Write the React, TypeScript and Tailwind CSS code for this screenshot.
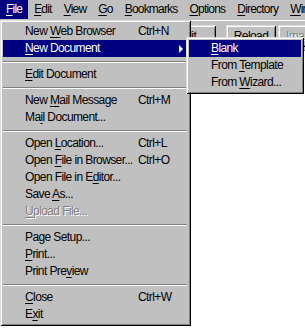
type Item =
  | { label: string; shortcut?: string; sub?: boolean; active?: boolean; disabled?: boolean }
  | 'sep';

const menuBar = ['&File', '&Edit', '&View', '&Go', '&Bookmarks', '&Options', '&Directory', '&Window'];

const fileItems: Item[] = [
  { label: 'New &Web Browser', shortcut: 'Ctrl+N' },
  { label: '&New Document', sub: true, active: true },
  'sep',
  { label: '&Edit Document' },
  'sep',
  { label: 'New &Mail Message', shortcut: 'Ctrl+M' },
  { label: 'Ma&il Document...' },
  'sep',
  { label: 'Open &Location...', shortcut: 'Ctrl+L' },
  { label: 'Open &File in Browser...', shortcut: 'Ctrl+O' },
  { label: 'Open File in E&ditor...' },
  { label: 'Save &As...' },
  { label: '&Upload File...', disabled: true },
  'sep',
  { label: 'Page Setup...' },
  { label: '&Print...' },
  { label: 'Print Pre&view' },
  'sep',
  { label: '&Close', shortcut: 'Ctrl+W' },
  { label: 'E&xit' },
];

const newDocItems = [
  { label: '&Blank', active: true },
  { label: 'From &Template' },
  { label: 'From &Wizard...' },
];

// "&" marks the access key letter
function Label({ text }: { text: string }) {
  const i = text.indexOf('&');
  if (i < 0) return <>{text}</>;
  return (
    <>
      {text.slice(0, i)}
      <span className="underline decoration-1 underline-offset-[2px]">{text[i + 1]}</span>
      {text.slice(i + 2)}
    </>
  );
}

const bevel =
  'shadow-[inset_1px_1px_0_#dfdfdf,inset_-1px_-1px_0_#000000,inset_2px_2px_0_#ffffff,inset_-2px_-2px_0_#808080]';

function ToolButton({ label, w, ml = 'ml-[2px]', dim = false }: { label: string; w: string; ml?: string; dim?: boolean }) {
  return (
    <div
      className={`${w} ${ml} h-[22px] shrink-0 flex items-center justify-center bg-[#c0c0c0] ${bevel} ${
        dim ? 'text-[#808080] [text-shadow:1px_1px_0_#ffffff]' : 'text-black'
      }`}
    >
      {label}
    </div>
  );
}

export default function App() {
  return (
    <div className="relative w-[305px] h-[328px] overflow-hidden bg-white flex flex-col font-['Liberation_Sans',Arial,sans-serif] text-[12px] tracking-[-0.6px] text-black select-none">
      {/* Menu bar */}
      <div className="h-[20px] shrink-0 bg-[#c0c0c0] flex items-start tracking-[-0.8px]">
        {menuBar.map((m, i) => (
          <div
            key={m}
            className={`h-[19px] px-[6px] leading-[19px] whitespace-nowrap ${
              i === 0 ? 'bg-[#000080] text-white' : ''
            }`}
          >
            <Label text={m} />
          </div>
        ))}
      </div>

      {/* Toolbar */}
      <div className="h-[30px] shrink-0 bg-[#c0c0c0] border-t border-white flex items-start pt-[4px] pl-[4px]">
        <ToolButton label="Back" w="w-[46px]" ml="ml-0" />
        <ToolButton label="Forward" w="w-[56px]" />
        <ToolButton label="Home" w="w-[46px]" />
        <ToolButton label="Edit" w="w-[58px]" />
        <ToolButton label="Reload" w="w-[50px]" ml="ml-[10px]" />
        <ToolButton label="Images" w="w-[52px]" dim />
      </div>
      <div className="flex-1 bg-white border-t border-[#808080]" />

      {/* File menu */}
      <div className={`absolute top-[20px] left-0 w-[191px] bg-[#c0c0c0] pt-[3px] pb-[3px] pl-[3px] pr-[4px] ${bevel}`}>
        {fileItems.map((it, idx) =>
          it === 'sep' ? (
            <div key={idx} className="h-[9px] pt-[4px]">
              <div className="h-[2px] border-t border-[#808080] border-b border-b-white" />
            </div>
          ) : (
            <div
              key={idx}
              className={`relative h-[17px] leading-[17px] pl-[22px] flex whitespace-nowrap ${
                it.active ? 'bg-[#000080] text-white' : ''
              } ${it.disabled ? 'text-[#808080] [text-shadow:1px_1px_0_#ffffff]' : ''}`}
            >
              <span className="w-[113px] shrink-0">
                <Label text={it.label} />
              </span>
              {it.shortcut && <span>{it.shortcut}</span>}
              {it.sub && (
                <svg className="absolute right-[3px] top-[5px]" width="5" height="8" viewBox="0 0 5 8">
                  <polygon points="0,0 4,4 0,8" fill={it.active ? '#ffffff' : '#000000'} />
                </svg>
              )}
            </div>
          )
        )}
      </div>

      {/* New Document submenu */}
      <div className={`absolute top-[37px] left-[186px] w-[118px] bg-[#c0c0c0] p-[3px] ${bevel}`}>
        {newDocItems.map((it) => (
          <div
            key={it.label}
            className={`h-[17px] leading-[17px] pl-[22px] whitespace-nowrap ${
              it.active ? 'bg-[#000080] text-white' : ''
            }`}
          >
            <Label text={it.label} />
          </div>
        ))}
      </div>
    </div>
  );
}
